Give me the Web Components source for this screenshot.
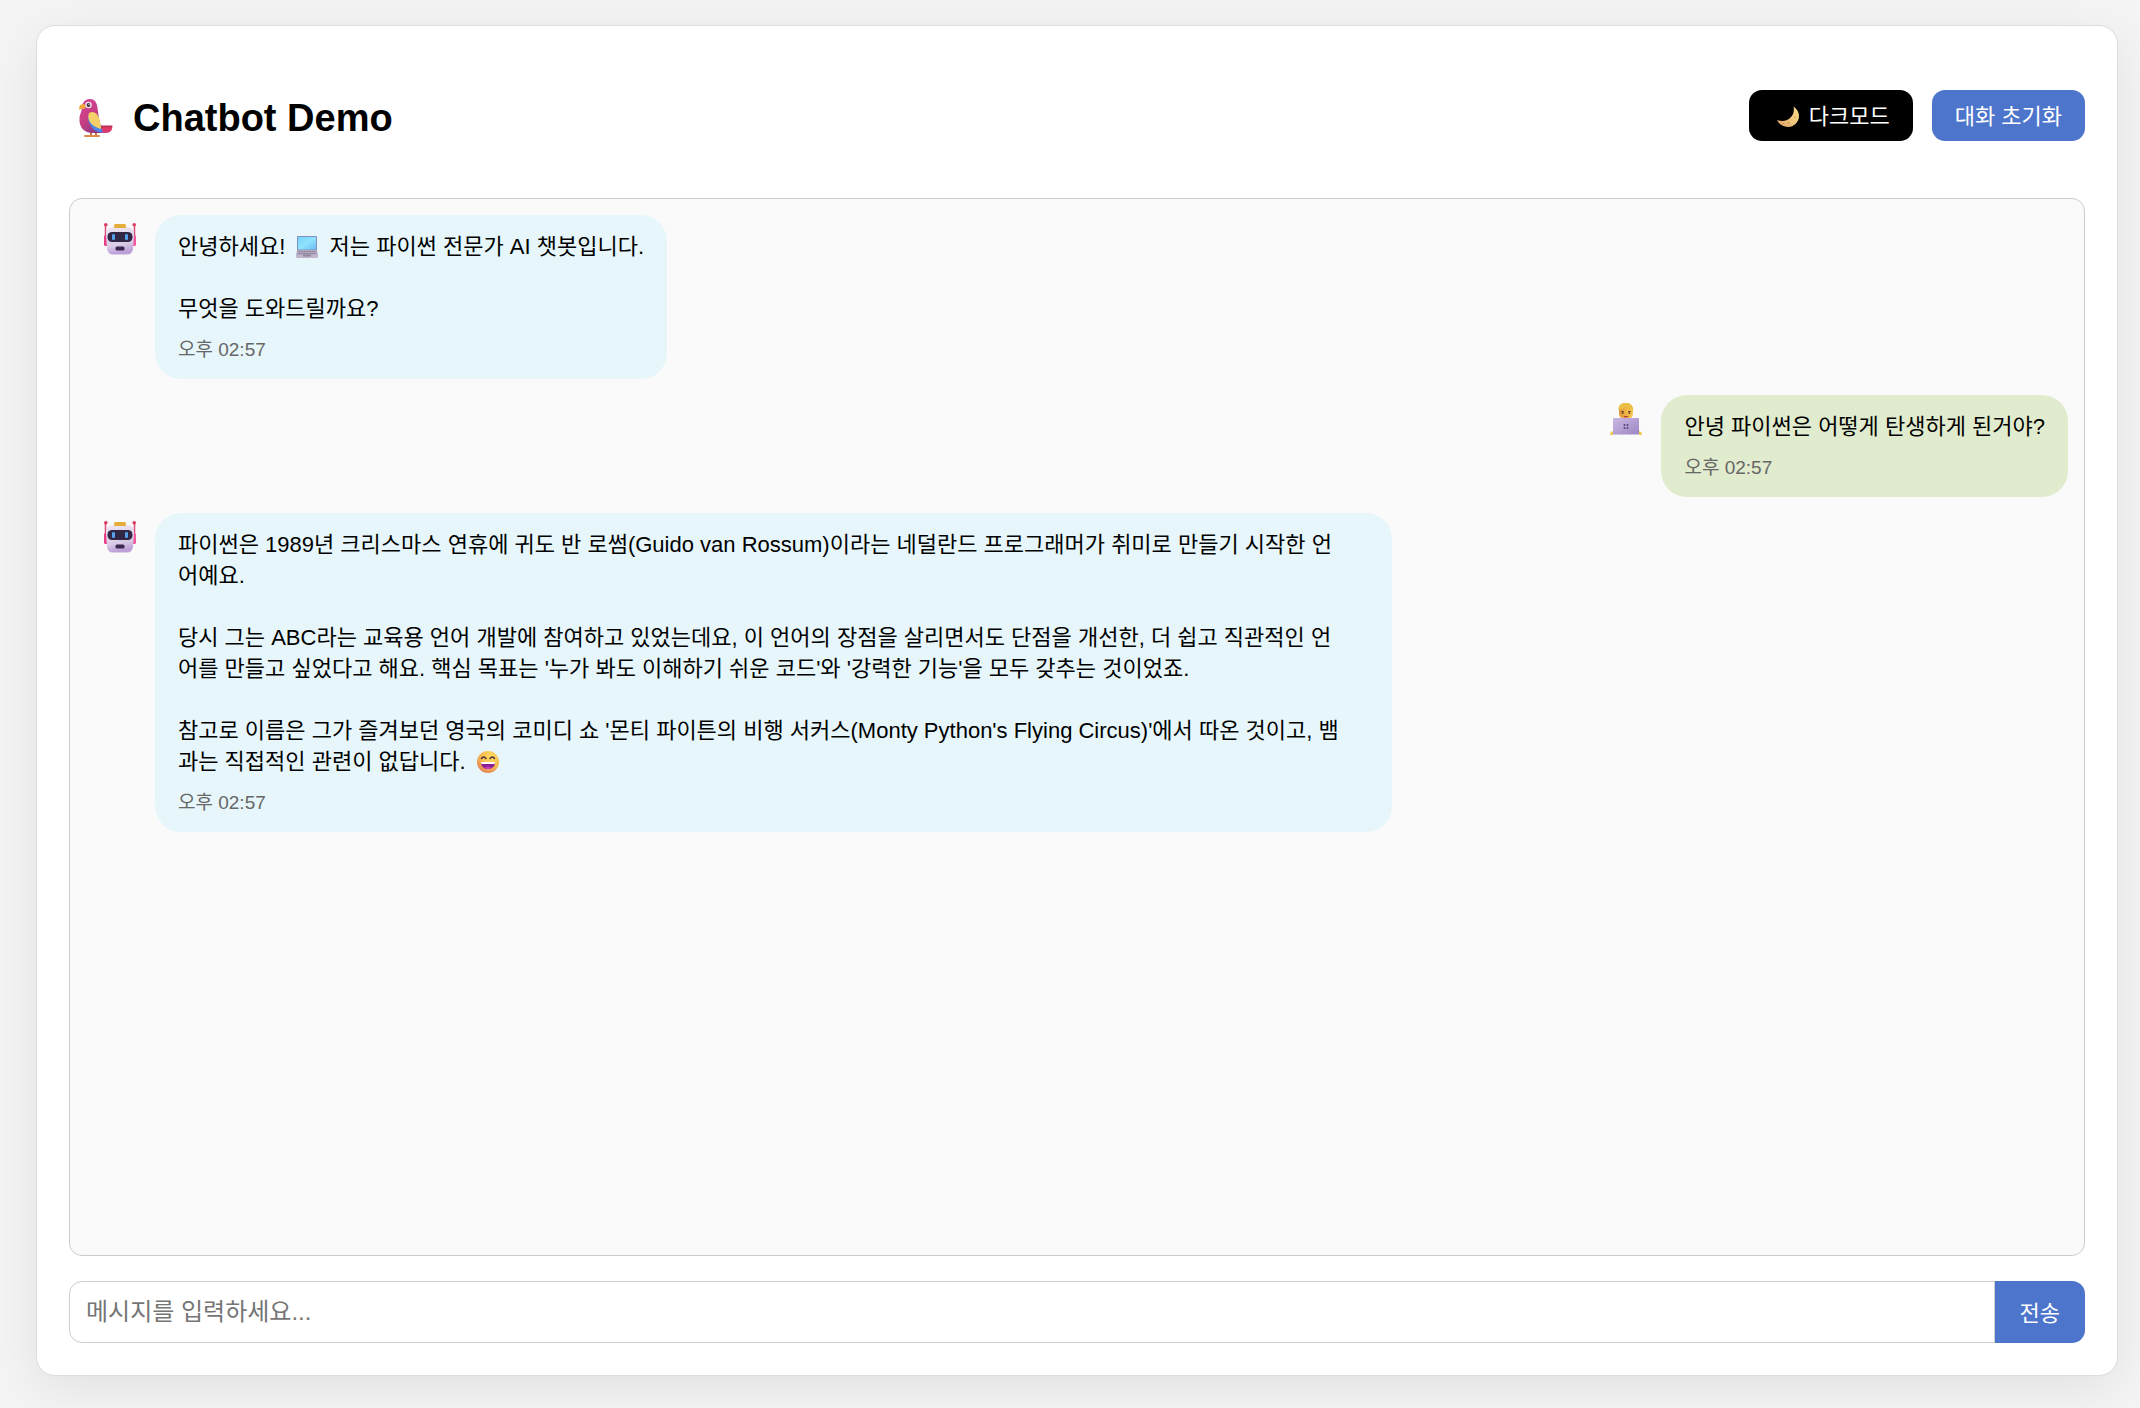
<!DOCTYPE html>
<html lang="ko">
<head>
<meta charset="UTF-8">
<meta name="viewport" content="width=device-width, initial-scale=1.0">
<title>Chatbot Demo</title>
<style>
    html, body {
        height: 100%;
    }

    body {
        margin: 0;
        background: #f4f4f4;
        color: #000;
        font-family: "Liberation Sans", "Noto Sans CJK KR", sans-serif;
        font-size: 22px;
        line-height: 31px;
    }
</style>
</head>
<body>
<chat-app>
    <chat-header slot="header">Chatbot Demo</chat-header>
    <chat-message from="bot" time="오후 02:57">
        <div>안녕하세요! <emoji-icon name="laptop"></emoji-icon> 저는 파이썬 전문가 AI 챗봇입니다.</div>
        <div>무엇을 도와드릴까요?</div>
    </chat-message>
    <chat-message from="user" time="오후 02:57">
        <div>안녕 파이썬은 어떻게 탄생하게 된거야?</div>
    </chat-message>
    <chat-message from="bot" time="오후 02:57" long>
        <div>파이썬은 1989년 크리스마스 연휴에 귀도 반 로썸(Guido van Rossum)이라는 네덜란드 프로그래머가 취미로 만들기 시작한 언<br>어예요.</div>
        <div>당시 그는 ABC라는 교육용 언어 개발에 참여하고 있었는데요, 이 언어의 장점을 살리면서도 단점을 개선한, 더 쉽고 직관적인 언<br>어를 만들고 싶었다고 해요. 핵심 목표는 '누가 봐도 이해하기 쉬운 코드'와 '강력한 기능'을 모두 갖추는 것이었죠.</div>
        <div>참고로 이름은 그가 즐겨보던 영국의 코미디 쇼 '몬티 파이튼의 비행 서커스(Monty Python's Flying Circus)'에서 따온 것이고, 뱀<br>과는 직접적인 관련이 없답니다. <emoji-icon name="smile"></emoji-icon></div>
    </chat-message>
    <chat-input slot="footer"></chat-input>
</chat-app>

<script>
const ICONS = {
    parrot: `
        <svg viewBox="0 0 34 38">
            <defs>
                <linearGradient id="body" x1="0" y1="0" x2="0.6" y2="1">
                    <stop offset="0" stop-color="#d9479b"/><stop offset="0.6" stop-color="#c53d82"/><stop offset="1" stop-color="#8f3b86"/>
                </linearGradient>
                <linearGradient id="tail" x1="0" y1="0" x2="0" y2="1">
                    <stop offset="0" stop-color="#b32a50"/><stop offset="0.4" stop-color="#e03a66"/><stop offset="1" stop-color="#d33b79"/>
                </linearGradient>
            </defs>
            <path d="M12 33v4M17 33v4" stroke="#c9713c" stroke-width="2"/>
            <path d="M6 37h14" stroke="#d98a4e" stroke-width="2" stroke-linecap="round"/>
            <path d="M20 26.500H33.500Q33.500 34 27 34H16Z" fill="url(#tail)"/>
            <path d="M3 7C4 2.500 7 0 11 0C16 0 18 4 18.500 9L20 20L23 34H14C5 34 0 28 0.500 20C0.500 15 3 13 3 7Z" fill="url(#body)"/>
            <path d="M10 16C16 15 20 19 21 24Q22 30 24 33.500C16 33 11 29 9 20Z" fill="#4b86ea"/>
            <path d="M10 14C14 11.500 18 13.500 20 19C21.500 24 22 27 22 30C14 28 7 22 10 14Z" fill="#f5d068"/>
            <path d="M5 5C0 5 0 8 0.500 11C2 9 4 11 6 9.500C7 8 7 6 5 5Z" fill="#efa63c"/>
            <circle cx="9.500" cy="6" r="3.300" fill="#eee5e8"/><circle cx="9.500" cy="6" r="1.900" fill="#4c3344"/><circle cx="10" cy="5.300" r=".6" fill="#fff"/>
        </svg>`,
    robot: `
        <svg viewBox="0 0 32 32">
            <defs>
                <linearGradient id="head" x1="0" y1="0" x2="0.2" y2="1">
                    <stop offset="0" stop-color="#eee6f4"/><stop offset="0.7" stop-color="#d9cde6"/><stop offset="1" stop-color="#bd9fd8"/>
                </linearGradient>
            </defs>
            <path d="M1.500 2v19M30.500 2v19" stroke="#d94b76" stroke-width="1.500"/>
            <circle cx="1.800" cy="1.800" r="1.800" fill="#d93d64"/><circle cx="30.200" cy="1.800" r="1.800" fill="#d93d64"/>
            <rect x="0" y="12" width="4" height="11" rx="1.500" fill="#e93e86"/><rect x="28" y="12" width="4" height="11" rx="1.500" fill="#f35a9d"/>
            <path d="M2 12Q2 4 9 4H23Q30 4 30 12L29 26Q28 31.500 23 31.500H9Q4 31.500 3 26Z" fill="url(#head)"/>
            <rect x="10" y="1" width="12" height="4" rx="1.500" fill="#e4ae3b"/>
            <rect x="3.500" y="9" width="25" height="10" rx="4.500" fill="#332746"/>
            <rect x="8" y="11" width="3" height="6" rx="1.300" fill="#54a2ec"/><rect x="21" y="11" width="3" height="6" rx="1.300" fill="#54a2ec"/>
            <rect x="11.500" y="23.500" width="9" height="4" rx="1.500" fill="#3a2850"/>
        </svg>`,
    coder: `
        <svg viewBox="0 0 32 32">
            <defs>
                <linearGradient id="lid" x1="0" y1="0" x2="1" y2="1">
                    <stop offset="0" stop-color="#cbb8e2"/><stop offset="1" stop-color="#9c87c4"/>
                </linearGradient>
                <linearGradient id="face" x1="0" y1="0" x2="1" y2="0">
                    <stop offset="0" stop-color="#dc9636"/><stop offset="0.5" stop-color="#f0b347"/><stop offset="1" stop-color="#f4c74e"/>
                </linearGradient>
            </defs>
            <path d="M0 32Q0 28 4 28H28Q32 28 32 32Z" fill="#f2c84d"/>
            <path d="M9 7Q9 0 16 0T23 7V10Q23 16 16 16T9 10Z" fill="url(#face)"/>
            <path d="M8.500 7Q8 1 14 0Q22 -1 23.500 7Q19 6 16 3.500Q13 6 8.500 7Z" fill="#eac145"/>
            <path d="M11 8.500h3M18 8.500h3" stroke="#8a5130"/><circle cx="12.700" cy="10" r=".9" fill="#59412f"/><circle cx="19.300" cy="10" r=".9" fill="#59412f"/>
            <path d="M14 13.200Q16 14.500 18 13.200" stroke="#b02e3d" stroke-width="1.300" fill="none"/>
            <rect x="3" y="15" width="26" height="16.500" rx="1" fill="url(#lid)"/><path d="M3 31.500h26" stroke="#d0c3df"/>
            <circle cx="14.500" cy="22" r="1" fill="#55427b"/><circle cx="17.500" cy="22" r="1" fill="#55427b"/><circle cx="14.500" cy="25" r="1" fill="#55427b"/><circle cx="17.500" cy="25" r="1" fill="#55427b"/>
        </svg>`,
    laptop: `
        <svg viewBox="0 0 22 22">
            <defs>
                <linearGradient id="screen" x1="0" y1="0" x2="1" y2="1">
                    <stop offset="0" stop-color="#77d2fa"/><stop offset="0.5" stop-color="#90e3ff"/><stop offset="1" stop-color="#6bbcf3"/>
                </linearGradient>
            </defs>
            <rect x="1" y="0" width="20" height="15" rx="1" fill="#7f91bd"/>
            <rect x="2" y="1" width="18" height="12.500" fill="url(#screen)"/>
            <path d="M1 14H21L22 20H0Z" fill="#b3a9c0"/>
            <path d="M2.500 15.500H19.500M2 17.500H20" stroke="#8b8198" stroke-dasharray="2 .6"/>
            <rect x="0" y="19" width="22" height="3" rx="1" fill="#c2b6cd"/><rect x="7" y="18.500" width="8" height="2" fill="#91859f"/>
        </svg>`,
    smile: `
        <svg viewBox="0 0 22 22">
            <defs>
                <radialGradient id="skin" cx="0.65" cy="0.25" r="0.85">
                    <stop offset="0" stop-color="#ffdc60"/><stop offset="0.6" stop-color="#f5b650"/><stop offset="1" stop-color="#df7458"/>
                </radialGradient>
            </defs>
            <circle cx="11" cy="11" r="11" fill="url(#skin)"/>
            <path d="M4.500 7.500Q6.500 4.500 9 7.500M13 7.500Q15.500 4.500 17.500 7.500" stroke="#4a2a34" stroke-width="1.400" fill="none" stroke-linecap="round"/>
            <path d="M4 11H18Q18 18 11 18T4 11Z" fill="#8b2190"/>
            <path d="M4 11H18L17.500 13H4.500Z" fill="#fff"/><path d="M7 17Q11 14 15 17Q11 19 7 17Z" fill="#c43bc5"/>
        </svg>`,
    moon: `
        <svg viewBox="0 0 22 22">
            <defs>
                <linearGradient id="moon" x1="0" y1="1" x2="1" y2="0">
                    <stop offset="0" stop-color="#e3a06a"/><stop offset="0.5" stop-color="#efc77c"/><stop offset="1" stop-color="#f6dd86"/>
                </linearGradient>
            </defs>
            <path d="M16.500 0.500C20 3 22 6 22 10C22 16 17 21 11 21C6 21 2 18.500 0 14C5 16 10 15 13 12C16.500 9 17.500 5 16.500 0.500Z" fill="url(#moon)"/>
            <circle cx="11.500" cy="17" r="1" fill="#cf9d5c"/><circle cx="18" cy="11" r=".9" fill="#d6ac61"/><circle cx="6.500" cy="17.500" r=".7" fill="#c88c57"/>
        </svg>`
};

class EmojiIcon extends HTMLElement {
    constructor() {
        super();
        this.attachShadow({ mode: 'open' });
    }

    connectedCallback() {
        this.shadowRoot.innerHTML = `
            <style>
                :host {
                    display: inline-block;
                    width: 22px;
                    height: 22px;
                    margin: 0 5px;
                    vertical-align: -4px;
                }

                svg {
                    display: block;
                    width: 100%;
                    height: 100%;
                }
            </style>
            ${ICONS[this.getAttribute('name')] || ''}
        `;
    }
}

class ChatHeader extends HTMLElement {
    constructor() {
        super();
        this.attachShadow({ mode: 'open' });
    }

    connectedCallback() {
        this.shadowRoot.innerHTML = `
            <style>
                :host {
                    display: block;
                }

                header {
                    display: flex;
                    align-items: center;
                    justify-content: space-between;
                    padding: 32px 0 57px;
                }

                h1 {
                    display: flex;
                    align-items: center;
                    gap: 20px;
                    margin: 0;
                    padding: 4px 0 0 10px;
                    font-size: 38px;
                    line-height: 38px;
                }

                h1 emoji-icon {
                    width: 34px;
                    height: 38px;
                    margin: 0;
                }

                .actions {
                    display: flex;
                    gap: 19px;
                }

                button {
                    display: flex;
                    align-items: center;
                    gap: 5px;
                    padding: 11px 23px 9px;
                    border: none;
                    border-radius: 13px;
                    background: #4c75cb;
                    color: #fff;
                    font: inherit;
                    cursor: pointer;
                }

                .dark {
                    background: #000;
                }
            </style>
            <header>
                <h1><emoji-icon name="parrot"></emoji-icon><slot></slot></h1>
                <div class="actions">
                    <button type="button" class="dark"><emoji-icon name="moon"></emoji-icon>다크모드</button>
                    <button type="button">대화 초기화</button>
                </div>
            </header>
        `;
    }
}

class ChatMessage extends HTMLElement {
    constructor() {
        super();
        this.attachShadow({ mode: 'open' });
    }

    connectedCallback() {
        const avatar = this.getAttribute('from') === 'user' ? 'coder' : 'robot';

        this.shadowRoot.innerHTML = `
            <style>
                :host {
                    display: flex;
                    align-items: flex-start;
                    gap: 19px;
                    max-width: 65%;
                    margin-left: 18px;
                }

                :host([from="user"]) {
                    align-self: flex-end;
                }

                .avatar {
                    flex: none;
                    width: 32px;
                    height: 32px;
                    margin: 8px 0 0;
                }

                .bubble {
                    padding: 16px 23px;
                    border-radius: 26px;
                    background: #e6f6fa;
                    word-break: break-word;
                }

                :host([from="user"]) .bubble {
                    background: #e1ebcd;
                }

                :host([long]) {
                    width: 65%;
                }

                :host([long]) .bubble {
                    flex: 1;
                }

                .text {
                    display: flex;
                    flex-direction: column;
                    gap: 31px;
                }

                time {
                    display: block;
                    margin-top: 12px;
                    color: #666;
                    font-size: 19px;
                    line-height: 27px;
                }
            </style>
            <emoji-icon class="avatar" name="${avatar}"></emoji-icon>
            <div class="bubble">
                <div class="text"><slot></slot></div>
                <time>${this.getAttribute('time')}</time>
            </div>
        `;
    }
}

class ChatInput extends HTMLElement {
    constructor() {
        super();
        this.attachShadow({ mode: 'open' });
    }

    connectedCallback() {
        this.shadowRoot.innerHTML = `
            <style>
                :host {
                    display: block;
                    margin-top: 25px;
                }

                form {
                    display: flex;
                    margin: 0;
                }

                input {
                    flex: 1;
                    min-width: 0;
                    box-sizing: border-box;
                    height: 62px;
                    padding: 0 16px;
                    border: 1px solid #ccc;
                    border-radius: 13px 0 0 13px;
                    outline: none;
                    background: #fff;
                    font-family: inherit;
                    font-size: 24px;
                }

                input::placeholder {
                    color: #757575;
                }

                button {
                    padding: 2px 25px 0;
                    border: none;
                    border-radius: 0 13px 13px 0;
                    background: #4c75cb;
                    color: #fff;
                    font: inherit;
                    cursor: pointer;
                }
            </style>
            <form>
                <input type="text" aria-label="메시지" placeholder="메시지를 입력하세요...">
                <button type="submit">전송</button>
            </form>
        `;
        this.shadowRoot.querySelector('form').addEventListener('submit', (e) => e.preventDefault());
    }
}

class ChatApp extends HTMLElement {
    constructor() {
        super();
        this.attachShadow({ mode: 'open' });
    }

    connectedCallback() {
        this.shadowRoot.innerHTML = `
            <style>
                :host {
                    display: flex;
                    box-sizing: border-box;
                    min-height: 100%;
                    padding: 25px 22px 32px 36px;
                }

                main {
                    flex: 1;
                    min-width: 0;
                    display: flex;
                    flex-direction: column;
                    padding: 32px;
                    border: 1px solid #ddd;
                    border-radius: 19px;
                    background: #fff;
                    box-shadow: 0 13px 51px rgba(0, 0, 0, 0.08);
                }

                .messages {
                    flex: 1;
                    display: flex;
                    flex-direction: column;
                    align-items: flex-start;
                    gap: 16px;
                    padding: 16px;
                    border: 1px solid #ccc;
                    border-radius: 13px;
                    background: #fafafa;
                }
            </style>
            <main>
                <slot name="header"></slot>
                <section class="messages"><slot></slot></section>
                <slot name="footer"></slot>
            </main>
        `;
    }
}

customElements.define('emoji-icon', EmojiIcon);
customElements.define('chat-header', ChatHeader);
customElements.define('chat-message', ChatMessage);
customElements.define('chat-input', ChatInput);
customElements.define('chat-app', ChatApp);
</script>
</body>
</html>
